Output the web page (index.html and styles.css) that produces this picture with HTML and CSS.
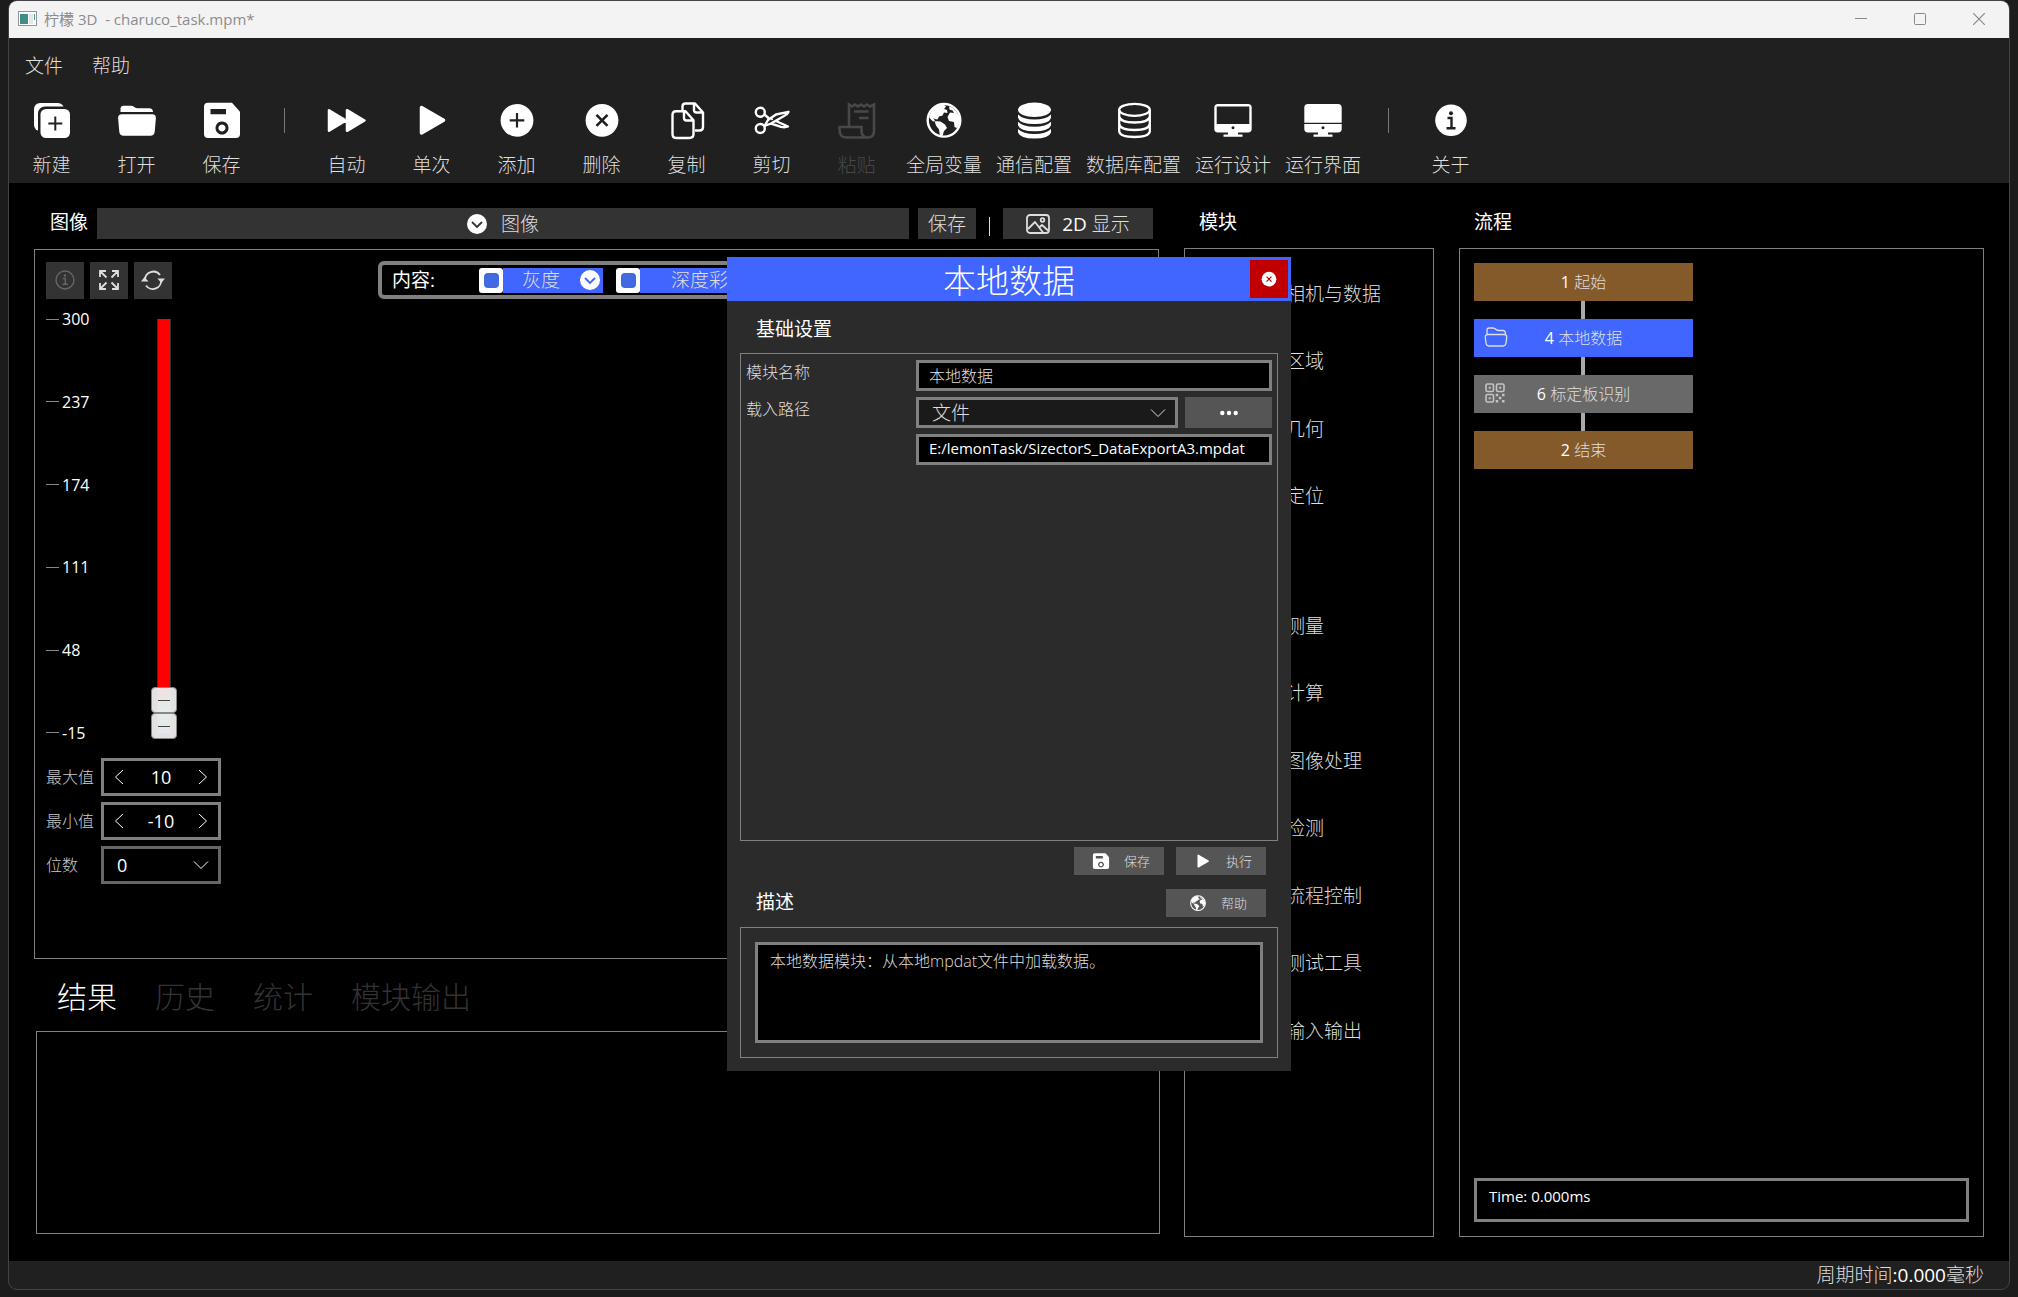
FILE: index.html
```html
<!DOCTYPE html>
<html lang="zh-CN">
<head>
<meta charset="utf-8">
<title>柠檬 3D - charuco_task.mpm*</title>
<link rel="stylesheet" href="styles.css">
</head>
<body>
<svg class="sprite" aria-hidden="true">
  <symbol id="i-new" viewBox="0 0 40 40"><rect x="2" y="3" width="30" height="28" rx="6" fill="currentColor"/><rect x="6" y="6.500" width="33" height="33" rx="7" fill="#202020"/><rect x="8.500" y="9" width="29.500" height="29" rx="5.500" fill="currentColor"/><path d="M23.300 16.500v14M16.300 23.500h14" stroke="#202020" stroke-width="2"/></symbol>
  <symbol id="i-open" viewBox="0 0 40 40"><path d="M3.500 12V9q0-3.300 3.300-3.300h7q2 0 3.500 1.300 1.500 1.300 3.500 1.300h11.500q3.500 0 3.700 3.700z" fill="currentColor"/><path d="M5 14.300h30q4.200 0 3.900 4l-1.200 13.500q-.4 4-4.400 4H6.700q-4 0-4.400-4L1.100 18.300q-.3-4 3.900-4z" fill="currentColor"/></symbol>
  <symbol id="i-save" viewBox="0 0 40 40"><path fill-rule="evenodd" d="M6 2.700h24l8 9V34q0 4-4 4H6q-4 0-4-4V6.700q0-4 4-4zM8.500 9v5.300H24V9zM20 21.500a6.500 6.500 0 1 0 .01 0zM20 24.500a3.500 3.500 0 1 1-.01 0z" fill="currentColor"/></symbol>
  <symbol id="i-auto" viewBox="0 0 40 40"><path d="M2 10.200v20.600l17-10.300zM20 10.200v20.600l17.500-10.300z" fill="currentColor" stroke="currentColor" stroke-width="2.500" stroke-linejoin="round"/></symbol>
  <symbol id="i-play" viewBox="0 0 40 40"><path d="M9.500 7.500v25.500l22-12.800z" fill="currentColor" stroke="currentColor" stroke-width="3.500" stroke-linejoin="round"/></symbol>
  <symbol id="i-add" viewBox="0 0 40 40"><circle cx="20" cy="20.300" r="16.400" fill="currentColor"/><path d="M20 13v14.600M12.700 20.300h14.600" stroke="#202020" stroke-width="2.200"/></symbol>
  <symbol id="i-del" viewBox="0 0 40 40"><circle cx="20" cy="20.300" r="16.400" fill="currentColor"/><path d="M14.500 14.800l11 11M25.500 14.800l-11 11" stroke="var(--cut,#202020)" stroke-width="2.600"/></symbol>
  <symbol id="i-copy" viewBox="0 0 40 40"><g fill="none" stroke="currentColor" stroke-width="2.400" stroke-linejoin="round"><path d="M15.500 10V6.500q0-3 3-3h9.500l8 9V27q0 3.500-3.500 3.500H28M27 3.500v6.500q0 2.500 2.500 2.500H36"/><path d="M9 11.200h9.500l8 9V34q0 4-4 4H9q-3.500 0-3.500-4V15q0-3.800 3.500-3.800zM17 11.200V18q0 2.500 2.500 2.500h7"/></g></symbol>
  <symbol id="i-cut" viewBox="0 0 40 40"><g fill="none" stroke="currentColor" stroke-width="2.400" stroke-linejoin="round"><circle cx="8.300" cy="12.300" r="4.500"/><circle cx="8.300" cy="28.500" r="4.500"/><path d="M12.500 26L16 20l8-5.500 12.500-2.700q-1 2.700-4.500 4.200L19 23.500 12.500 26zM12.500 14.500l4.500 4M24 21l12 5.500q-3 1.200-7 .300L19 23.500"/></g><circle cx="20" cy="19.300" r="1" fill="currentColor"/></symbol>
  <symbol id="i-paste" viewBox="0 0 40 40"><path d="M12 26.500V4.500l3 2 3-2 3 2 3-2 3 2 3-2 3 2 4-2V31q0 6-5.500 6.500H9q-6.500 0-6.500-8v-2.500h22V31q0 6.500 6.500 6.500M17 11.500h14.500M22 18h9.500" fill="none" stroke="currentColor" stroke-width="2.600"/></symbol>
  <symbol id="i-globe" viewBox="0 0 40 40"><circle cx="20" cy="20.300" r="16.300" fill="none" stroke="currentColor" stroke-width="2.400"/><path d="M5 17Q7 9 14 5.500l5.500-1 2.500 2-2 2.500 3 1 .5 3-3.500-.5-1.500 3-3.500 1-1.500 3-3-.5L9 17.500 11 21l-2 .5-3-3zM10.500 21l6 .5 4.500 3 2 3.500-3 3-1.500 5h-2.500l-1-6.500-3-4zM25 6.500q5 1 8 6l3 6-.5 5-2.500 4.500-2.500-1-.5-5-5-1-1.500-4L26 12.500l4 .5-1.500-2.500-3-1z" fill="currentColor"/></symbol>
  <symbol id="i-dbf" viewBox="0 0 40 40"><ellipse cx="20.500" cy="9.800" rx="16.500" ry="7.200" fill="currentColor"/><g fill="currentColor"><path id="dbl" d="M4 14.500q5 5 16.500 5t16.500-5v3.500q-2 6-16.500 6T4 18z"/><use href="#dbl" y="7.200"/><use href="#dbl" y="14.400"/></g></symbol>
  <symbol id="i-db" viewBox="0 0 40 40"><g fill="none" stroke="currentColor" stroke-width="2.300"><ellipse cx="20.500" cy="9.800" rx="15.300" ry="6"/><path d="M5.200 10v21.500q1 5.500 15.300 5.500t15.300-5.500V10M5.200 16.500q1 6 15.300 6t15.300-6M5.200 24q1 6 15.300 6t15.300-6"/></g></symbol>
  <symbol id="i-mon" viewBox="0 0 40 40"><path fill-rule="evenodd" d="M5 4h30q3.700 0 3.700 3.700v21q0 3.800-3.700 3.800H25v2h4.500v2.200h-19v-2.200H15v-2H5q-3.700 0-3.700-3.800v-21Q1.300 4 5 4zM3.700 6.500v17.500h32.600V6.500zM20 26.200a1.500 1.500 0 1 0 .01 0z" fill="currentColor"/></symbol>
  <symbol id="i-monf" viewBox="0 0 40 40"><path fill-rule="evenodd" d="M5 4h30q3.700 0 3.700 3.700v21q0 3.800-3.700 3.800H25v2h4.500v2.200h-19v-2.200H15v-2H5q-3.700 0-3.700-3.800v-21Q1.300 4 5 4zM1.300 22.800v1.200h37.400v-1.200zM20 26.200a1.500 1.500 0 1 0 .01 0z" fill="currentColor"/></symbol>
  <symbol id="i-info" viewBox="0 0 40 40"><circle cx="20" cy="20.300" r="15.800" fill="currentColor"/><circle cx="20" cy="13.300" r="2" fill="#202020"/><path d="M16.500 18h4v10M15.500 28.300h9" stroke="#202020" stroke-width="2.400" fill="none"/></symbol>
  <symbol id="i-infoo" viewBox="0 0 20 20"><g fill="none" stroke="currentColor" stroke-width="1.400"><circle cx="10" cy="10" r="9"/><path d="M8 8.500h2.300v5.500M7.500 14.300h5.300"/></g><circle cx="10" cy="5.500" r="1.200" fill="currentColor"/></symbol>
  <symbol id="i-full" viewBox="0 0 20 20"><path d="M1 7V1h6M1.500 1.500l6 6M13 1h6v6M18.500 1.500l-6 6M1 13v6h6M1.500 18.500l6-6M13 19h6v-6M18.500 18.500l-6-6" fill="none" stroke="currentColor" stroke-width="1.800"/></symbol>
  <symbol id="i-sync" viewBox="0 0 24 20"><path d="M4 10a8.300 8.300 0 0 1 15-5M20 9.500a8.300 8.300 0 0 1-15 6" fill="none" stroke="currentColor" stroke-width="1.800"/><path d="M0 11.500h7.500L3.500 7zM16.500 8.500H24L20.300 13z" fill="currentColor"/></symbol>
  <symbol id="i-circ" viewBox="0 0 20 20"><circle cx="10" cy="10" r="10" fill="#fff"/><path d="M5 8l5 5 5-5" fill="none" stroke="var(--cut,#333)" stroke-width="1.800"/></symbol>
  <symbol id="i-pic" viewBox="0 0 24 20"><g fill="none" stroke="currentColor" stroke-width="1.800" stroke-linejoin="round"><rect x="1" y="1" width="22" height="18" rx="3"/><path d="M2 15l7-7 8 10.500M13 13.500l3-2.500 6 5.500"/><circle cx="16.500" cy="6" r="1.800"/></g></symbol>
  <symbol id="i-fold" viewBox="0 0 24 20"><path d="M3 7.500V3q0-2 2-2h4q1.500 0 3 1.500 1 1 3 1h4q2.500 0 2.500 4M4 7.500h16q3 0 2.700 3L22 16q-.5 3-3 3H5q-2.500 0-3-3l-.7-5.500q-.3-3 2.700-3z" fill="none" stroke="currentColor" stroke-width="1.300"/></symbol>
  <symbol id="i-qr" viewBox="0 0 20 20"><g fill="none" stroke="currentColor" stroke-width="1.600"><rect x="1" y="1" width="7.500" height="7.500" rx="1.500"/><rect x="11.500" y="1" width="7.500" height="7.500" rx="1.500"/><rect x="1" y="11.500" width="7.500" height="7.500" rx="1.500"/></g><path d="M3.700 3.700h2v2h-2zM14.200 3.700h2v2h-2zM3.700 14.200h2v2h-2zM10.700 10.700h2.500v2.500h-2.500zM17 10.700h2.500v2.500H17zM13.800 13.800h2.500v2.500h-2.500zM10.700 17h2.500v2.500h-2.500zM17 17h2.500v2.500H17z" fill="currentColor"/></symbol>
  <symbol id="i-down" viewBox="0 0 16 16"><path d="M1 4.500l7 7 7-7" fill="none" stroke="currentColor"/></symbol>
  <symbol id="i-left" viewBox="0 0 16 16"><path d="M12 1L4.500 8l7.500 7" fill="none" stroke="currentColor"/></symbol>
  <symbol id="i-right" viewBox="0 0 16 16"><path d="M4 1l7.500 7L4 15" fill="none" stroke="currentColor"/></symbol>
</svg>

<div class="window">
  <header class="titlebar">
    <svg class="app-icon" viewBox="0 0 19 15"><rect x=".5" y=".5" width="18" height="14" fill="#fff" stroke="#8f979c"/><rect x="2" y="3" width="8" height="10" fill="#3f8f86"/><rect x="11" y="3" width="4" height="10" fill="#e6e8e8"/><rect x="16" y="3" width="1" height="6" fill="#49a07a"/></svg>
    <span class="app-title">柠檬 3D &nbsp;- charuco_task.mpm*</span>
    <button class="win-btn" aria-label="最小化"><svg viewBox="0 0 12 12"><path d="M0 5.500h12" stroke="#888"/></svg></button>
    <button class="win-btn" aria-label="最大化"><svg viewBox="0 0 12 12"><rect x=".5" y=".5" width="11" height="11" rx="1" fill="none" stroke="#888"/></svg></button>
    <button class="win-btn" aria-label="关闭"><svg viewBox="0 0 12 12"><path d="M0 0l12 12M12 0L0 12" stroke="#888" stroke-width="1.200"/></svg></button>
  </header>

  <nav class="menu"><button>文件</button><button>帮助</button></nav>

  <div class="toolbar">
    <button class="tool"><svg><use href="#i-new"/></svg>新建</button>
    <button class="tool"><svg><use href="#i-open"/></svg>打开</button>
    <button class="tool"><svg><use href="#i-save"/></svg>保存</button>
    <span class="tool-sep"></span>
    <button class="tool"><svg><use href="#i-auto"/></svg>自动</button>
    <button class="tool"><svg><use href="#i-play"/></svg>单次</button>
    <button class="tool"><svg><use href="#i-add"/></svg>添加</button>
    <button class="tool"><svg><use href="#i-del"/></svg>删除</button>
    <button class="tool"><svg><use href="#i-copy"/></svg>复制</button>
    <button class="tool"><svg><use href="#i-cut"/></svg>剪切</button>
    <button class="tool" disabled><svg><use href="#i-paste"/></svg>粘贴</button>
    <button class="tool"><svg><use href="#i-globe"/></svg>全局变量</button>
    <button class="tool"><svg><use href="#i-dbf"/></svg>通信配置</button>
    <button class="tool"><svg><use href="#i-db"/></svg>数据库配置</button>
    <button class="tool"><svg><use href="#i-mon"/></svg>运行设计</button>
    <button class="tool"><svg><use href="#i-monf"/></svg>运行界面</button>
    <span class="tool-sep"></span>
    <button class="tool"><svg><use href="#i-info"/></svg>关于</button>
  </div>

  <main class="work">
    <section class="col">
      <div class="image-head">
        <h2>图像</h2>
        <button class="gray image-pick"><svg class="circ"><use href="#i-circ"/></svg>图像</button>
        <button class="gray image-save">保存</button>
        <span class="bar"></span>
        <button class="gray image-mode"><svg class="pic"><use href="#i-pic"/></svg><span><span class="latin">2D</span> 显示</span></button>
      </div>
      <div class="frame viewer">
        <div class="viewer-top">
          <button class="gray sq" disabled aria-label="信息"><svg><use href="#i-infoo"/></svg></button>
          <button class="gray sq" aria-label="全屏"><svg><use href="#i-full"/></svg></button>
          <button class="gray sq" aria-label="刷新"><svg class="pic"><use href="#i-sync"/></svg></button>
          <div class="content-box">
            <span class="content-label">内容:</span>
            <input type="checkbox" aria-label="显示灰度">
            <button class="blue">灰度<svg class="circ"><use href="#i-circ"/></svg></button>
            <input type="checkbox" aria-label="显示深度彩色">
            <button class="blue wide">深度彩色<svg class="circ"><use href="#i-circ"/></svg></button>
          </div>
        </div>
        <div class="range">
          <ul class="scale"><li>300</li><li>237</li><li>174</li><li>111</li><li>48</li><li>-15</li></ul>
          <div class="sliders">
            <span class="track"></span>
            <input type="range" min="-15" max="300" value="10" aria-label="最大值滑块">
            <input type="range" min="-15" max="300" value="-10" aria-label="最小值滑块">
          </div>
        </div>
        <div class="limits">
          <label for="max">最大值</label>
          <div class="stepper"><button aria-label="减少"><svg><use href="#i-left"/></svg></button><input id="max" type="text" value="10"><button aria-label="增加"><svg><use href="#i-right"/></svg></button></div>
          <label for="min">最小值</label>
          <div class="stepper"><button aria-label="减少"><svg><use href="#i-left"/></svg></button><input id="min" type="text" value="-10"><button aria-label="增加"><svg><use href="#i-right"/></svg></button></div>
          <label for="digits">位数</label>
          <div class="drop digits"><select id="digits"><option>0</option></select><svg><use href="#i-down"/></svg></div>
        </div>
      </div>
      <div class="tabs"><button class="on">结果</button><button>历史</button><button>统计</button><button>模块输出</button></div>
      <div class="frame results"></div>
    </section>

    <section class="col">
      <h2>模块</h2>
      <div class="frame modules">
        <ul><li>相机与数据</li><li>区域</li><li>几何</li><li>定位</li></ul>
        <ul><li>测量</li><li>计算</li><li>图像处理</li><li>检测</li><li>流程控制</li><li>测试工具</li><li>输入输出</li></ul>
      </div>
    </section>

    <section class="col">
      <h2>流程</h2>
      <div class="frame flow">
        <ol class="nodes">
          <li class="node"><span class="latin">1</span> 起始</li>
          <li class="node active"><svg class="pic"><use href="#i-fold"/></svg><span class="latin">4</span> 本地数据</li>
          <li class="node idle"><svg class="qr"><use href="#i-qr"/></svg><span class="latin">6</span> 标定板识别</li>
          <li class="node"><span class="latin">2</span> 结束</li>
        </ol>
        <output class="time">Time: 0.000ms</output>
      </div>
    </section>
  </main>

  <footer class="status">周期时间<span class="latin">:0.000</span>毫秒</footer>
</div>

<div class="dialog" role="dialog" aria-label="本地数据">
  <header class="dialog-head"><h1>本地数据</h1><button class="close" aria-label="关闭"><svg><use href="#i-del"/></svg></button></header>
  <h2>基础设置</h2>
  <div class="group settings">
    <label for="name">模块名称</label>
    <input id="name" class="field" type="text" value="本地数据">
    <label for="source">载入路径</label>
    <div class="source">
      <div class="drop"><select id="source"><option>文件</option></select><svg><use href="#i-down"/></svg></div>
      <button class="mid" aria-label="浏览"><svg class="dots" viewBox="0 0 18 6"><circle cx="2.300" cy="3" r="2.200"/><circle cx="9" cy="3" r="2.200"/><circle cx="15.700" cy="3" r="2.200"/></svg></button>
    </div>
    <input class="field path" type="text" value="E:/lemonTask/SizectorS_DataExportA3.mpdat" aria-label="文件路径">
  </div>
  <div class="actions">
    <button class="mid small"><svg><use href="#i-save"/></svg>保存</button>
    <button class="mid small"><svg><use href="#i-play"/></svg>执行</button>
  </div>
  <div class="about-head"><h2>描述</h2><button class="mid small help"><svg><use href="#i-globe"/></svg>帮助</button></div>
  <div class="group about"><textarea readonly aria-label="描述">本地数据模块：从本地mpdat文件中加载数据。</textarea></div>
</div>
</body>
</html>
```
FILE: styles.css
```css
* { box-sizing: border-box; }

body {
  margin: 0;
  background: #1c1c1c;
  color: #dedede;
  font: 300 19px/24px "Open Sans", "Noto Sans CJK SC", sans-serif;
}

button, input, select, textarea { font: inherit; color: inherit; }
button { border: 0; padding: 0; background: none; }
ul, ol { list-style: none; margin: 0; padding: 0; }
h1, h2 { margin: 0; }
h2 { color: #fff; font-size: 19px; font-weight: 400; line-height: 28px; }
svg { display: block; flex: none; }
.sprite { position: absolute; width: 0; height: 0; }
.latin { color: #fff; font-weight: 400; }

.window {
  display: flex;
  flex-direction: column;
  min-height: calc(100vh - 7px);
  margin: 0 8px;
  border: 1px solid #444;
  border-radius: 9px;
  overflow: hidden;
  background: #202020;
}

.titlebar {
  display: flex;
  align-items: center;
  height: 37px;
  padding: 0 1px 2px 9px;
  background: #f3f3f3;
  color: #8c8c8c;
  font-size: 15px;
  font-weight: 400;
}
.app-icon { width: 19px; height: 15px; }
.app-title { flex: 1; margin-left: 7px; }
.win-btn { display: grid; place-items: center; width: 59px; height: 35px; }
.win-btn svg { width: 12px; height: 12px; }

.menu { display: flex; gap: 29px; height: 54px; padding: 2px 0 0 16px; align-items: center; }

.toolbar { display: flex; gap: 14px; height: 91px; padding: 8px 0 0 7px; }
.tool {
  display: flex;
  flex-direction: column;
  align-items: center;
  gap: 13px;
  min-width: 71px;
  height: 77px;
  white-space: nowrap;
}
.tool svg { width: 40px; height: 40px; color: #fff; }
.tool:disabled, .tool:disabled svg { color: #484848; }
.tool-sep { width: 1px; height: 25px; margin: 8px 12px 0 13px; background: #777; }

.work {
  flex: 1;
  display: grid;
  grid-template-columns: minmax(0, 1fr) 250px 525px;
  gap: 25px;
  padding: 25px 25px 24px;
  background: #000;
}
.col { display: flex; flex-direction: column; }
.col > h2 { height: 40px; padding-left: 15px; }
.frame { border: 1px solid #808080; }
.gray { background: #333; }

.image-head { display: flex; align-items: stretch; height: 31px; margin-bottom: 10px; padding: 0 6px 0 16px; }
.image-head button { display: flex; align-items: center; justify-content: center; }
.image-pick { flex: 1; gap: 14px; margin: 0 9px; }
.image-save { width: 58px; }
.bar { width: 1px; height: 19px; margin: 9px 13px 0; background: #ddd; }
.image-mode { width: 150px; gap: 12px; }
.circ { width: 20px; height: 20px; }
.pic { width: 24px; height: 20px; }

.viewer { flex: 1; padding: 11px; }
.viewer-top { display: flex; align-items: center; gap: 6px; height: 38px; }
.sq { display: grid; place-items: center; width: 38px; height: 37px; }
.sq svg { height: 20px; }
.sq svg:not(.pic) { width: 20px; }
.sq:disabled { color: #666; }
.content-box {
  display: flex;
  align-items: center;
  height: 38px;
  margin-left: 200px;
  padding-left: 10px;
  border: 4px solid #808080;
  border-radius: 6px;
}
.content-label { width: 87px; color: #fff; font-weight: 400; }
input[type="checkbox"] {
  appearance: none;
  display: grid;
  place-items: center;
  width: 24px;
  height: 25px;
  margin: 0;
  border-radius: 3px;
  background: #fff;
}
input[type="checkbox"]::before {
  content: "";
  width: 15px;
  height: 15px;
  border-radius: 4px;
  background: #4169e1;
}
.blue {
  display: flex;
  align-items: center;
  justify-content: space-between;
  width: 100px;
  height: 25px;
  margin-right: 13px;
  padding: 0 3px 0 19px;
  background: #4066ff;
}
.blue .circ { --cut: #4066ff; }
.blue.wide { width: 180px; padding-left: 31px; }

.range { display: flex; height: 440px; margin-top: 7px; }
.scale {
  display: flex;
  flex-direction: column;
  justify-content: space-between;
  width: 105px;
  padding: 1px 0;
  color: #fff;
  font-size: 16px;
  font-weight: 400;
}
.scale li { display: flex; align-items: center; gap: 3px; }
.scale li::before { content: ""; width: 13px; height: 1px; background: #888; }
.sliders { display: grid; width: 26px; justify-items: center; }
.sliders > * { grid-area: 1 / 1; }
.track {
  width: 14px;
  margin: 13px 0;
  border: solid #333;
  border-width: 0 1px;
  background: linear-gradient(#f00 90%, #1a5 94%, #1a5 97%, #53f);
}
input[type="range"] {
  appearance: none;
  writing-mode: vertical-lr;
  direction: rtl;
  width: 26px;
  height: 440px;
  margin: 0;
  background: none;
  pointer-events: none;
}
input[type="range"]::-webkit-slider-thumb {
  appearance: none;
  width: 26px;
  height: 26px;
  border: 1px solid #888;
  border-radius: 4px;
  background: linear-gradient(#444, #444) center / 12px 1px no-repeat, rgba(240, 240, 240, .94);
  pointer-events: auto;
}

.limits {
  display: grid;
  grid-template-columns: 55px 120px;
  gap: 6px 0;
  margin-top: 12px;
  align-items: center;
  font-size: 16px;
  color: #c8c8c8;
}
.stepper, .drop { display: flex; align-items: center; border: 3px solid #808080; }
.stepper { height: 38px; padding: 0 7px; color: #fff; font-size: 18px; font-weight: 400; }
.stepper input { flex: 1; min-width: 0; padding: 0; border: 0; background: none; text-align: center; }
.stepper svg { width: 16px; height: 16px; }
.drop { position: relative; height: 31px; background: #1a1a1a; }
.drop select { appearance: none; width: 100%; height: 100%; padding: 0 13px; border: 0; background: none; }
.drop svg { position: absolute; right: 9px; width: 16px; height: 16px; pointer-events: none; }
.digits { height: 38px; border-color: #666; background: #000; color: #fff; font-size: 18px; font-weight: 400; }

.tabs { display: flex; gap: 38px; height: 72px; padding: 4px 0 0 23px; font-size: 30px; line-height: 36px; color: #333; }
.tabs .on { color: #fff; }
.results { height: 203px; margin: 0 -1px 3px 2px; }

.modules { flex: 1; display: flex; flex-direction: column; gap: 62px; padding: 11px 0 0 101px; }
.modules li { height: 67px; line-height: 68px; }
.modules li:nth-child(even) { height: 68px; }

.flow { flex: 1; display: flex; flex-direction: column; justify-content: space-between; padding: 14px; }
.nodes { display: grid; gap: 18px; width: 219px; font-size: 16px; }
.node { position: relative; height: 38px; background: #845a2b; text-align: center; line-height: 39px; }
.node + .node::before {
  content: "";
  position: absolute;
  left: 107px;
  bottom: 100%;
  width: 4px;
  height: 18px;
  background: #aaa;
}
.node svg { position: absolute; left: 10px; top: 8px; }
.node.active { background: #4066ff; }
.node.idle { background: #696969; }
.qr { width: 22px; height: 20px; }
.node.idle svg { color: #c4c4c4; }
.time { display: block; height: 44px; padding: 3px 12px; border: 3px solid #808080; color: #fff; font-size: 15px; font-weight: 400; }

.status { height: 28px; padding-right: 25px; text-align: right; line-height: 28px; }

.dialog {
  position: absolute;
  left: 0;
  right: 0;
  top: 257px;
  width: 564px;
  margin: 0 auto;
  padding-bottom: 13px;
  background: #2b2b2b;
}
.dialog h2 { padding: 4px 0 0 29px; line-height: 48px; }
.dialog-head { position: relative; height: 44px; background: #4066ff; text-align: center; }
.dialog-head h1 { color: #fff; font-size: 33px; font-weight: 300; line-height: 48px; }
.close {
  position: absolute;
  right: 3px;
  top: 3px;
  display: grid;
  place-items: center;
  width: 38px;
  height: 38px;
  background: #c00000;
  --cut: #c00000;
}
.close svg { width: 18px; height: 18px; color: #fff; }
.group { margin: 0 13px; border: 1px solid #808080; }
.settings {
  display: grid;
  grid-template-columns: 170px 1fr;
  grid-auto-rows: 31px;
  gap: 6px 0;
  height: 488px;
  padding: 6px 5px;
  font-size: 16px;
}
.settings label { line-height: 24px; }
.field { height: 31px; padding: 0 10px 2px; border: 3px solid #808080; background: #000; }
.path { grid-column: 2; padding-bottom: 4px; color: #fff; font-size: 15px; font-weight: 400; }
.source { display: grid; grid-template-columns: 262px 1fr; gap: 7px; font-size: 19px; }
.mid { display: flex; align-items: center; justify-content: center; background: #555; }
.dots { width: 18px; height: 6px; fill: #fff; }
.actions { display: flex; justify-content: flex-end; gap: 12px; padding: 6px 25px 0 0; }
.small { width: 90px; height: 28px; gap: 14px; font-size: 13px; padding-left: 4px; }
.small svg { width: 18px; height: 18px; color: #fff; }
.about-head { display: flex; align-items: center; justify-content: space-between; padding-right: 25px; }
.about-head .help { width: 100px; margin-top: 4px; }
.about-head h2 { padding-top: 2px; line-height: 50px; }
.about { padding: 14px; height: 131px; }
.about textarea { display: block; width: 100%; height: 101px; padding: 4px 12px; border: 3px solid #808080; resize: none; outline: 0; background: #000; font-size: 16px; }
```
